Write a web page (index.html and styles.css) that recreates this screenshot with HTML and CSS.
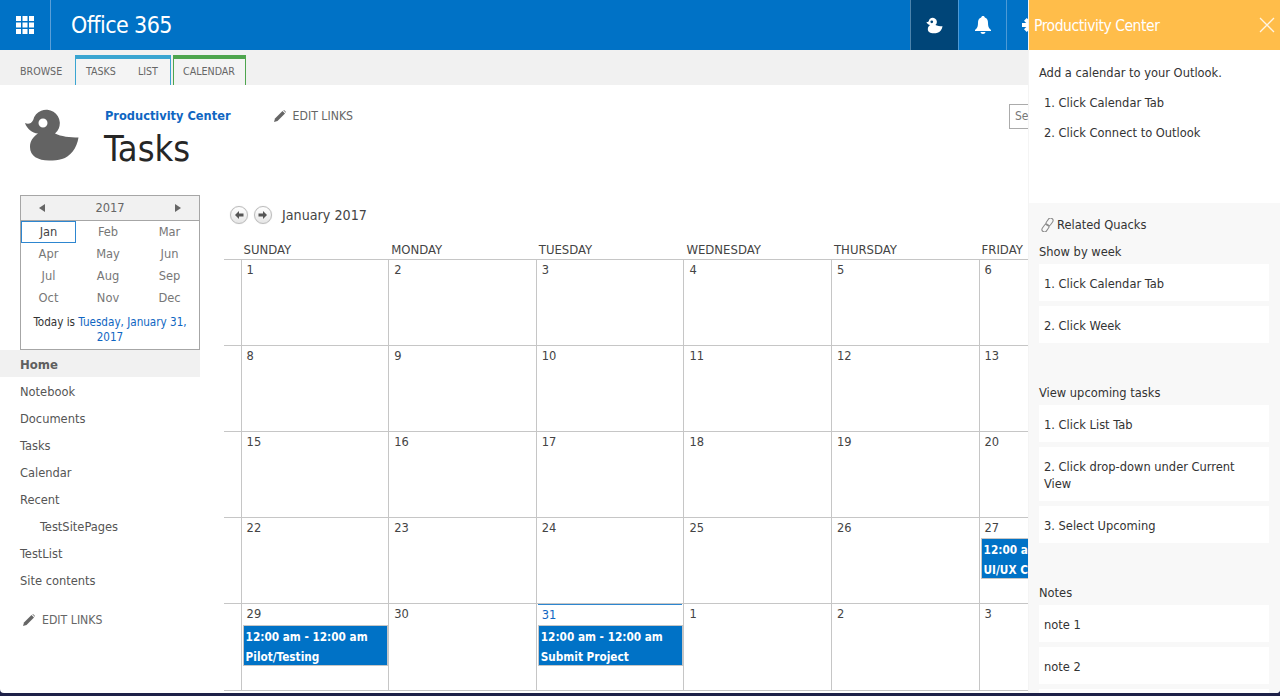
FILE: index.html
```html
<!DOCTYPE html>
<html lang="en">
<head>
<meta charset="utf-8">
<title>Tasks</title>
<link rel="stylesheet" href="styles.css">
</head>
<body>
<svg class="defs" width="0" height="0" aria-hidden="true">
  <symbol id="duck" viewBox="0 0 56 54">
    <path fill-rule="evenodd" d="M1 15C4 16.500 7 16 9.200 12A13.500 13.500 0 1 1 31 25.500C37 28.500 46 29.500 54.500 29.500C53 40 46 49 38 51C34 52.500 30 52.500 25 52.500C14 52.500 6 48 6 39C6 33 9 29 14 25.500C8 25 3 21 1 15ZM23.500 15A4.500 4.500 0 1 0 14.500 15A4.500 4.500 0 1 0 23.500 15Z"/>
  </symbol>
  <symbol id="pencil" viewBox="0 0 12 12">
    <path d="M0 12L1 8.500L8.500 1L11 3.500L3.500 11Z"/><path d="M9.300 .3L10 0L12 2L11.700 2.700Z"/>
  </symbol>
</svg>
<div class="page">
  <header class="suite">
    <div class="waffle">
      <svg width="18" height="18" viewBox="0 0 18 18" fill="#fff"><path d="M0 0h5v5H0zM6.500 0h5v5h-5zM13 0h5v5h-5zM0 6.500h5v5H0zM6.500 6.500h5v5h-5zM13 6.500h5v5h-5zM0 13h5v5H0zM6.500 13h5v5h-5zM13 13h5v5h-5z"/></svg>
    </div>
    <div class="brand">Office 365</div>
    <div class="suite-actions">
      <div class="suite-btn active"><svg class="duck-sm" width="17" height="17"><use href="#duck"/></svg></div>
      <div class="suite-btn"><svg width="18" height="18" viewBox="0 0 18 18" fill="#fff"><path d="M9 0C10 0 10.800 .7 10.800 1.600C13.200 2.400 14 4.500 14 7C14 10 14.500 12 17 14L17 15L1 15L1 14C3.500 12 4 10 4 7C4 4.500 4.800 2.400 7.200 1.600C7.200 .7 8 0 9 0ZM6.500 16L11.500 16C11.300 17.200 10.300 18 9 18C7.700 18 6.700 17.200 6.500 16Z"/></svg></div>
      <div class="suite-btn"><svg width="18" height="18" viewBox="0 0 18 18" fill="#fff"><circle cx="9" cy="9" r="5.500"/><path d="M7 0h4v4H7zM7 14h4v4H7zM0 7h4v4H0zM14 7h4v4h-4z"/><path d="M2 4.800L4.800 2L7 4.200L4.200 7zM11 13.800L13.800 11L16 13.200L13.200 16zM13.200 2L16 4.800L13.800 7L11 4.200zM4.200 11L7 13.800L4.800 16L2 13.200z"/></svg></div>
    </div>
  </header>

  <nav class="ribbon">
    <span class="tab-plain">BROWSE</span>
    <div class="tab-group tab-group-blue"><span>TASKS</span><span>LIST</span></div>
    <div class="tab-group tab-group-green"><span>CALENDAR</span></div>
  </nav>

  <section class="title-area">
    <svg class="logo" width="56" height="54"><use href="#duck"/></svg>
    <div class="titles">
      <div class="site-row">
        <a class="site-name">Productivity Center</a>
        <span class="edit-links top-edit"><svg width="12" height="12"><use href="#pencil"/></svg>EDIT LINKS</span>
      </div>
      <h1 class="page-title">Tasks</h1>
    </div>
    <div class="search">Search this site</div>
  </section>

  <div class="body-row">
    <aside class="sidebar">
      <div class="picker">
        <div class="picker-head">
          <svg width="6" height="8" viewBox="0 0 6 8"><path d="M6 0V8L0 4Z"/></svg>
          <span>2017</span>
          <svg width="6" height="8" viewBox="0 0 6 8"><path d="M0 0V8L6 4Z"/></svg>
        </div>
        <div class="months">
          <span class="selected">Jan</span><span>Feb</span><span>Mar</span>
          <span>Apr</span><span>May</span><span>Jun</span>
          <span>Jul</span><span>Aug</span><span>Sep</span>
          <span>Oct</span><span>Nov</span><span>Dec</span>
        </div>
        <div class="today">Today is <a>Tuesday, January 31, 2017</a></div>
      </div>
      <ul class="nav">
        <li class="current">Home</li>
        <li>Notebook</li>
        <li>Documents</li>
        <li>Tasks</li>
        <li>Calendar</li>
        <li>Recent</li>
        <li class="sub">TestSitePages</li>
        <li>TestList</li>
        <li>Site contents</li>
      </ul>
      <span class="edit-links side-edit"><svg width="12" height="12"><use href="#pencil"/></svg>EDIT LINKS</span>
    </aside>

    <main class="calendar">
      <div class="cal-nav">
        <span class="round"><svg width="10" height="10" viewBox="0 0 10 10"><path d="M5 1L1 5L5 9V6.500H9.500V3.500H5Z"/></svg></span>
        <span class="round"><svg width="10" height="10" viewBox="0 0 10 10"><path d="M5 1L9 5L5 9V6.500H.5V3.500H5Z"/></svg></span>
        <span class="cal-title">January 2017</span>
      </div>
      <div class="week heads">
        <i></i><b>SUNDAY</b><b>MONDAY</b><b>TUESDAY</b><b>WEDNESDAY</b><b>THURSDAY</b><b>FRIDAY</b><b></b>
      </div>
      <div class="week"><i></i><div class="day">1</div><div class="day">2</div><div class="day">3</div><div class="day">4</div><div class="day">5</div><div class="day">6</div><div class="day"></div></div>
      <div class="week"><i></i><div class="day">8</div><div class="day">9</div><div class="day">10</div><div class="day">11</div><div class="day">12</div><div class="day">13</div><div class="day"></div></div>
      <div class="week"><i></i><div class="day">15</div><div class="day">16</div><div class="day">17</div><div class="day">18</div><div class="day">19</div><div class="day">20</div><div class="day"></div></div>
      <div class="week"><i></i><div class="day">22</div><div class="day">23</div><div class="day">24</div><div class="day">25</div><div class="day">26</div>
        <div class="day">27<div class="event">12:00 am<br>UI/UX C</div></div><div class="day"></div></div>
      <div class="week last"><i></i>
        <div class="day">29<div class="event">12:00 am - 12:00 am<br>Pilot/Testing</div></div>
        <div class="day">30</div>
        <div class="day now"><span>31</span><div class="event">12:00 am - 12:00 am<br>Submit Project</div></div>
        <div class="day">1</div><div class="day">2</div><div class="day">3</div><div class="day"></div></div>
    </main>
  </div>

  <aside class="panel">
    <div class="panel-head">
      <span>Productivity Center</span>
      <svg width="16" height="16" viewBox="0 0 16 16"><path d="M1 1L15 15M15 1L1 15"/></svg>
    </div>
    <div class="panel-intro">
      <p>Add a calendar to your Outlook.</p>
      <ol>
        <li>1. Click Calendar Tab</li>
        <li>2. Click Connect to Outlook</li>
      </ol>
    </div>
    <div class="panel-rest">
      <div class="related"><svg width="13" height="14" viewBox="0 0 13 14"><g fill="none" stroke="#888" stroke-width="1"><rect x="6" y="-.3" width="5" height="8.500" rx="2.500" transform="rotate(35 8.500 4)"/><rect x="2" y="5.800" width="5" height="8.500" rx="2.500" transform="rotate(35 4.500 10)"/></g></svg>Related Quacks</div>
      <div class="quack">
        <h2>Show by week</h2>
        <div class="step">1. Click Calendar Tab</div>
        <div class="step">2. Click Week</div>
      </div>
      <div class="quack">
        <h2>View upcoming tasks</h2>
        <div class="step">1. Click List Tab</div>
        <div class="step">2. Click drop-down under Current View</div>
        <div class="step">3. Select Upcoming</div>
      </div>
      <div class="quack">
        <h2>Notes</h2>
        <div class="step">note 1</div>
        <div class="step">note 2</div>
        <div class="step step-empty"></div>
      </div>
    </div>
  </aside>
</div>
</body>
</html>
```
FILE: styles.css
```css
* { box-sizing: border-box; }
html, body { margin: 0; height: 100%; }
body {
  background: #1e2148;
  font-family: "DejaVu Sans", "Liberation Sans", sans-serif;
  font-stretch: condensed;
  font-size: 12.750px;
  color: #444;
  overflow: hidden;
}
.defs { position: absolute; }
.page {
  position: relative;
  height: 693px;
  background: #fff;
  overflow: hidden;
  border-radius: 0 0 4px 4px;
}
.suite { display: flex; height: 50px; background: #0072c6; color: #fff; }
.waffle {
  width: 51px;
  display: flex;
  align-items: center;
  padding-left: 16px;
  border-right: 1px solid #5a9fd8;
}
.brand { margin-left: 20px; font-size: 23px; letter-spacing: -.6px; line-height: 50px; }
.suite-actions { display: flex; margin-left: auto; padding-right: 226px; }
.suite-btn {
  width: 48px;
  display: flex;
  align-items: center;
  justify-content: center;
  border-left: 1px solid #4d9ad6;
}
.suite-btn.active { background: #004578; border-left-color: #4d84ad; }
.duck-sm { fill: #fff; }

.ribbon {
  display: flex;
  align-items: flex-end;
  height: 35px;
  padding-left: 20px;
  background: #f1f1f1;
  color: #666;
  font-size: 10.600px;
}
.tab-plain { width: 55px; line-height: 28px; }
.tab-group {
  display: flex;
  height: 30px;
  border: 1px solid;
  border-top-width: 4px;
  border-bottom: 0;
  padding: 0 10px 0 9px;
  line-height: 25px;
  background: #f4f4f4;
}
.tab-group-blue { width: 96px; gap: 22px; border-color: #3aa5d1; padding-left: 10px; }
.tab-group-green { width: 73px; margin-left: 2px; border-color: #4ea54e; }

.title-area { display: flex; height: 110px; padding: 23px 0 0 24px; }
.logo { fill: #636363; flex: none; }
.titles { margin-left: 24px; margin-top: -3px; }
.site-row { display: flex; align-items: center; padding-left: 1px; height: 20px; }
.site-name { font-weight: 700; color: #0f66c2; font-size: 12.700px; }
.edit-links { display: inline-flex; align-items: center; font-size: 12.200px; color: #666; }
.edit-links svg { fill: #666; margin-right: 7px; }
.top-edit { margin-left: 43px; padding-top: 2px; }
.page-title { margin: 2px 0 0; font-size: 36px; line-height: 44px; font-weight: 400; color: #262626; }
.search {
  margin: -4px 11px 0 auto;
  width: 260px;
  height: 25px;
  border: 1px solid #ababab;
  padding-left: 5px;
  line-height: 23px;
  color: #777;
  font-size: 12px;
  white-space: nowrap;
}

.body-row { display: flex; }
.sidebar { width: 200px; flex: none; }
.picker { margin-left: 20px; height: 155px; border: 1px solid #a6a6a6; }
.picker-head {
  display: flex;
  align-items: center;
  justify-content: space-between;
  height: 25px;
  padding: 0 18px 1px;
  background: #f1f1f1;
  border-bottom: 1px solid #a6a6a6;
  color: #666;
}
.picker-head svg { fill: #666; }
.months { display: grid; grid-template-columns: 55px 64px 59px; grid-auto-rows: 22px; color: #777; }
.months span { text-align: center; line-height: 20px; border: 1px solid transparent; }
.months .selected { color: #444; border-color: #2d86d0; }
.today { padding: 6px 6px 0; text-align: center; font-size: 11.600px; line-height: 15px; color: #333; }
.today a { color: #0f66c2; }
.nav { list-style: none; margin: 0; padding: 0; color: #555; }
.nav li { height: 27px; padding: 1px 0 0 20px; line-height: 27px; }
.nav .current { background: #f1f1f1; font-weight: 700; color: #5f5f5f; font-size: 13px; }
.nav .sub { padding-left: 40px; }
.side-edit { margin: 20px 0 0 23px; }

.calendar { flex: none; width: 1060px; margin-left: 24px; }
.cal-nav { display: flex; align-items: center; height: 40px; padding-left: 6px; }
.round {
  width: 18px;
  height: 18px;
  margin-right: 6px;
  border: 1px solid #bbb;
  border-radius: 50%;
  background: linear-gradient(#fff, #e6e6e6);
  display: flex;
  align-items: center;
  justify-content: center;
  box-shadow: 0 0 1px #ccc;
}
.round svg { fill: #555; }
.cal-title { margin-left: 4px; font-size: 14.200px; color: #444; }
.week {
  display: grid;
  grid-template-columns: 16.600px repeat(7, 147.600px);
  height: 86px;
  border-bottom: 1px solid #c6c6c6;
}
.week.heads { height: 25px; padding-top: 6px; line-height: 17px; }
.heads b { font-weight: 400; font-size: 13px; padding-left: 3px; color: #444; }
.week.last { height: 87px; }
.day {
  border-left: 1px solid #c6c6c6;
  padding: 1px 0 0 5px;
  line-height: 17px;
  color: #444;
  min-width: 0;
  overflow: hidden;
}
.event {
  margin: 2px 0 0 -4px;
  height: 41px;
  border: 1px solid #c6c6c6;
  background: #0072c6;
  color: #fff;
  font-weight: 700;
  font-size: 11.700px;
  line-height: 20px;
  padding: 1px 0 0 2px;
  white-space: nowrap;
  overflow: hidden;
}
.last .event { margin-top: 3px; }
.now { position: relative; }
.now::before {
  content: "";
  position: absolute;
  left: 1px;
  right: 1px;
  top: 0;
  height: 1px;
  background: #2d86d0;
}
.now span { display: block; color: #0f66c2; padding-top: 1px; margin-bottom: -1px; }

.panel {
  position: absolute;
  top: 0;
  right: 0;
  bottom: 0;
  width: 252px;
  background: #f8f8f8;
  border-left: 1px solid #f4f4f4;
  display: flex;
  flex-direction: column;
  overflow: hidden;
}
.panel-head {
  flex: none;
  display: flex;
  align-items: center;
  justify-content: space-between;
  height: 50px;
  padding: 1px 5px 0;
  background: #ffbd4a;
  color: #fff;
  font-size: 15.500px;
  letter-spacing: -.45px;
}
.panel-head svg { fill: none; stroke: #fff; stroke-width: 1.300; opacity: .85; margin-top: -1px; }
.panel-intro { flex: none; height: 153px; background: #fff; padding: 14px 10px 0; color: #333; }
.panel-intro p { margin: 0; line-height: 17px; }
.panel-intro ol { list-style: none; margin: 0; padding: 13px 0 0 5px; }
.panel-intro li { line-height: 17px; margin-bottom: 13px; }
.panel-rest { padding: 13px 11px 0 10px; color: #333; }
.related { display: flex; align-items: center; height: 17px; padding-left: 2px; margin-bottom: 10px; }
.related svg { margin-right: 3px; }
.quack { margin-bottom: 41px; }
.quack h2 { margin: 0; padding-bottom: 4px; font-size: 12.750px; font-weight: 400; line-height: 17px; color: #333; }
.step { background: #fff; padding: 11px 5px 9px; margin-bottom: 5px; line-height: 17px; }
.step-empty { height: 37px; }
```
